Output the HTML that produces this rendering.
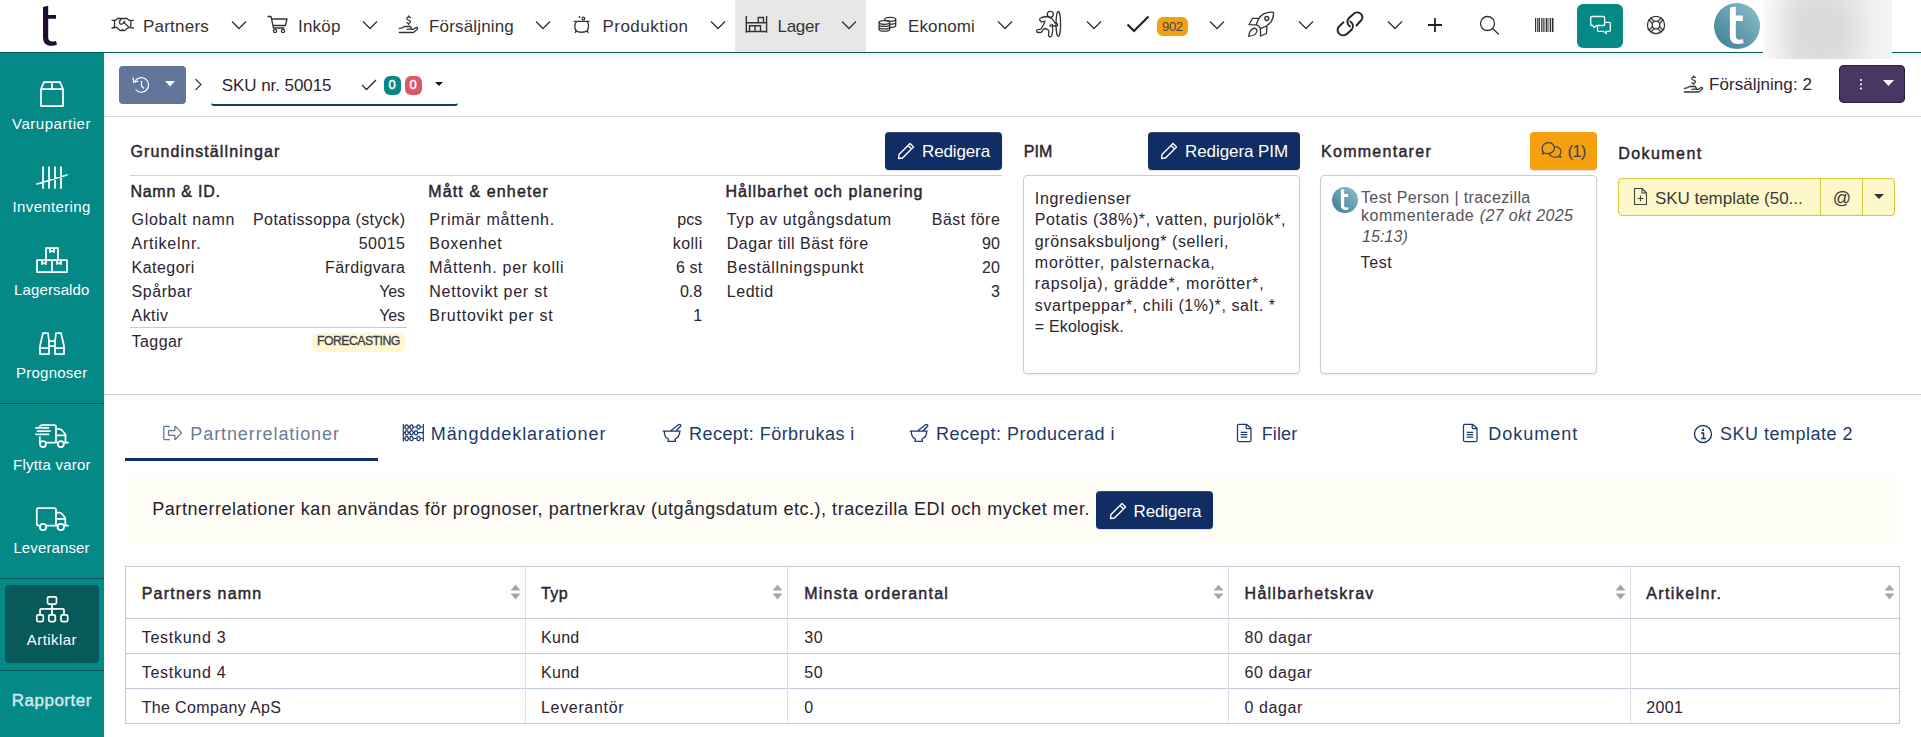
<!DOCTYPE html>
<html><head><meta charset="utf-8"><title>SKU nr. 50015</title>
<style>
html,body{margin:0;padding:0;}
body{width:1921px;height:737px;overflow:hidden;position:relative;background:#fff;font-family:"Liberation Sans",sans-serif;}
svg{overflow:visible}
</style></head><body>
<div style="position:absolute;left:0px;top:0px;width:1921px;height:52px;background:#ffffff;"></div>
<div style="position:absolute;left:735px;top:0px;width:131px;height:52px;background:#e7e7e7;"></div>
<div style="position:absolute;left:0px;top:52px;width:1921px;height:1px;background:#085b5a;"></div>
<div style="position:absolute;left:104px;top:53px;width:1817px;height:7px;background:linear-gradient(#efeff1,#ffffff)"></div>
<div style="position:absolute;left:104px;top:53px;width:5px;height:64px;background:linear-gradient(90deg,#f2f2f4,rgba(255,255,255,0))"></div>
<svg style="position:absolute;left:40px;top:3px;" width="20" height="46" viewBox="0 0 20 46"><path d="M3 4 L8.2 2.8 L8.2 12 L16 12 L16 15.8 L8.2 15.8 L8.2 34 C8.2 37.5 10 38.5 13 38.5 C14.5 38.5 15.5 38.2 16 38 L17 41.5 C15.5 42.5 13.5 42.8 11.5 42.8 C6 42.8 3 40 3 34 Z" fill="#1f0e30"/></svg>
<svg style="position:absolute;left:231px;top:20px;" width="16" height="10" viewBox="0 0 16 10"><path d="M1 1.5 L8 8.5 L15 1.5" fill="none" stroke="#333" stroke-width="1.3"/></svg>
<svg style="position:absolute;left:362px;top:20px;" width="16" height="10" viewBox="0 0 16 10"><path d="M1 1.5 L8 8.5 L15 1.5" fill="none" stroke="#333" stroke-width="1.3"/></svg>
<svg style="position:absolute;left:535px;top:20px;" width="16" height="10" viewBox="0 0 16 10"><path d="M1 1.5 L8 8.5 L15 1.5" fill="none" stroke="#333" stroke-width="1.3"/></svg>
<svg style="position:absolute;left:710px;top:20px;" width="16" height="10" viewBox="0 0 16 10"><path d="M1 1.5 L8 8.5 L15 1.5" fill="none" stroke="#333" stroke-width="1.3"/></svg>
<svg style="position:absolute;left:841px;top:20px;" width="16" height="10" viewBox="0 0 16 10"><path d="M1 1.5 L8 8.5 L15 1.5" fill="none" stroke="#333" stroke-width="1.3"/></svg>
<svg style="position:absolute;left:997px;top:20px;" width="16" height="10" viewBox="0 0 16 10"><path d="M1 1.5 L8 8.5 L15 1.5" fill="none" stroke="#333" stroke-width="1.3"/></svg>
<svg style="position:absolute;left:1086px;top:20px;" width="16" height="10" viewBox="0 0 16 10"><path d="M1 1.5 L8 8.5 L15 1.5" fill="none" stroke="#333" stroke-width="1.3"/></svg>
<svg style="position:absolute;left:1209px;top:20px;" width="16" height="10" viewBox="0 0 16 10"><path d="M1 1.5 L8 8.5 L15 1.5" fill="none" stroke="#333" stroke-width="1.3"/></svg>
<svg style="position:absolute;left:1298px;top:20px;" width="16" height="10" viewBox="0 0 16 10"><path d="M1 1.5 L8 8.5 L15 1.5" fill="none" stroke="#333" stroke-width="1.3"/></svg>
<svg style="position:absolute;left:1387px;top:20px;" width="16" height="10" viewBox="0 0 16 10"><path d="M1 1.5 L8 8.5 L15 1.5" fill="none" stroke="#333" stroke-width="1.3"/></svg>
<svg style="position:absolute;left:105px;top:10px;" width="36" height="30" viewBox="0 0 36 30"><path d="M7 10.3 L10.5 10.3 L12.5 8.5 L22 8.5 L24 10.3 L28.5 10.3 M9.5 10.3 L9.5 17.7 M7 18 L10.5 17.5 L12 17.5 L15 20.5 L17 20.5 L17.5 19.5 L18 20.5 L19.5 20.5 L24 17.3 L25.5 17.7 L28.5 18 M25.8 10.3 L25.8 17.7 M16.8 8.5 L14.6 11 C14.3 12.5 14.5 13.8 16 14.4 C17.5 14.5 18.5 13 19.5 11.3 L19.5 13 L24 17.3" fill="none" stroke="#333" stroke-width="1.3" stroke-linecap="round" stroke-linejoin="round" stroke-width="1.5"/></svg>
<svg style="position:absolute;left:267px;top:15px;" width="21" height="19" viewBox="0 0 21 19"><path d="M1 1.5 L4 1.5 L6.5 13 L17 13 M5 4 L20 4 L18.5 10.5 L6 10.5" fill="none" stroke="#333" stroke-width="1.3" stroke-linecap="round" stroke-linejoin="round"/><circle cx="8" cy="16" r="1.6" fill="none" stroke="#333" stroke-width="1.3" stroke-linecap="round" stroke-linejoin="round"/><circle cx="16" cy="16" r="1.6" fill="none" stroke="#333" stroke-width="1.3" stroke-linecap="round" stroke-linejoin="round"/></svg>
<svg style="position:absolute;left:394px;top:10px;" width="30" height="28" viewBox="0 0 30 28"><path d="M5.3 18.3 L8 17.8 L10.5 16.5 L16.5 16.5 L17.5 18.8 L13 19.3 M5.3 22.5 L19.5 22.5 L23 19.5 C24 18.5 23.5 17.3 22 17.5 L19.5 19.3 L17.3 19.3" fill="none" stroke="#333" stroke-width="1.3" stroke-linecap="round" stroke-linejoin="round"/><path d="M16.5 7.5 C15.5 6.8 14 6.8 13.2 7.6 C12.3 8.6 13 9.6 14.3 10 C15.8 10.5 16.8 11.2 16.2 12.5 C15.5 13.5 14 13.5 13 12.7 M14.6 5.8 L14.6 7 M14.6 13.3 L14.6 14.5" fill="none" stroke="#333" stroke-width="1.3" stroke-linecap="round" stroke-linejoin="round" stroke-width="1.4"/></svg>
<svg style="position:absolute;left:568px;top:10px;" width="28" height="28" viewBox="0 0 28 28"><path d="M6.3 11.4 L21 11.4 M8.3 11.8 C6.5 14 6.2 18 8 20.5 C10 22.8 17 22.8 19.3 20.5 C21 18 20.8 14 19.3 11.8 M8 21 L7.3 22.6 M19.3 21 L20 22.6" fill="none" stroke="#333" stroke-width="1.3" stroke-linecap="round" stroke-linejoin="round" stroke-width="1.4"/><circle cx="11.5" cy="7" r="0.9" fill="#333"/><circle cx="15.4" cy="8.5" r="1.3" fill="none" stroke="#333" stroke-width="1.3" stroke-linecap="round" stroke-linejoin="round" stroke-width="1.2"/></svg>
<svg style="position:absolute;left:740px;top:10px;" width="32" height="28" viewBox="0 0 32 28"><path d="M6.3 6 L6.3 22.8 M26.6 6 L26.6 22.8 M6.3 12.7 L26.6 12.7 M6.3 21.5 L26.6 21.5 M18.3 12.7 L18.3 7.5 L23.5 7.5 L23.5 12.7 M9.5 21.5 L9.5 15.8 L20.5 15.8 L20.5 21.5 M15 15.8 L15 21.5" fill="none" stroke="#333" stroke-width="1.4"/></svg>
<svg style="position:absolute;left:872px;top:10px;" width="30" height="28" viewBox="0 0 30 28"><ellipse cx="18.2" cy="9.3" rx="5.5" ry="1.9" fill="none" stroke="#333" stroke-width="1.3" stroke-linecap="round" stroke-linejoin="round"/><path d="M23.7 9.3 L23.7 15.5 C23.7 16.8 21 17.5 17.7 17.5 M17.7 14.3 C20 14.3 23.7 14 23.7 12.5" fill="none" stroke="#333" stroke-width="1.3" stroke-linecap="round" stroke-linejoin="round"/><ellipse cx="12.4" cy="12.5" rx="5.3" ry="1.8" fill="none" stroke="#333" stroke-width="1.3" stroke-linecap="round" stroke-linejoin="round" fill="#fff"/><path d="M7.1 12.5 L7.1 19.5 C7.1 21.8 17.7 21.8 17.7 19.5 L17.7 12.5 M7.1 14.8 C7.1 17 17.7 17 17.7 14.8 M7.1 17.3 C7.1 19.5 17.7 19.5 17.7 17.3" fill="none" stroke="#333" stroke-width="1.3" stroke-linecap="round" stroke-linejoin="round"/></svg>
<svg style="position:absolute;left:1030px;top:6px;" width="40" height="36" viewBox="0 0 40 36"><ellipse cx="28.3" cy="18" rx="2.3" ry="12.5" fill="none" stroke="#333" stroke-width="1.3" stroke-linecap="round" stroke-linejoin="round" stroke-width="1.7"/><circle cx="20.3" cy="8.3" r="3" fill="none" stroke="#333" stroke-width="1.3" stroke-linecap="round" stroke-linejoin="round" stroke-width="1.7"/><path d="M10 14.5 C9 13.5 10 12 11.5 11.5 L16 10.5 C19 10.5 21.5 11.5 23.5 14.5 L25 17 L27 17.5 C28 18 27.8 19.8 26.5 20 L23.5 20 L22 18.5 L22.8 24 L22 29 C21.8 31 19 31.5 18.5 29.5 L18.8 24.5 L16 22.5 L13.5 23 L11.3 26.3 L7.8 26.5 C6.3 26.3 6.3 24 7.8 23.7 L10.8 23.2 L13.5 19 L15 15 L11.5 16 Z" fill="none" stroke="#333" stroke-width="1.3" stroke-linecap="round" stroke-linejoin="round" stroke-width="1.7"/><path d="M20 17 L21.5 21 L19.5 20.5 Z" fill="#333"/></svg>
<svg style="position:absolute;left:1126px;top:15px;" width="25" height="19" viewBox="0 0 25 19"><path d="M1.5 9.5 L8 16 L22.5 1.5" fill="none" stroke="#222" stroke-width="2.2"/></svg>
<div style="position:absolute;left:1157px;top:17px;width:31px;height:19px;background:#f5a00e;border-radius:6px"></div>
<svg style="position:absolute;left:1240px;top:6px;" width="40" height="36" viewBox="0 0 40 36"><path d="M33.5 6.3 C26 5.5 21 9 18.5 13 L16.2 18.8 C18 19 19.5 20.3 20.5 22.7 L26.5 20 C31 17 34 12.5 33.5 6.3 Z M18.5 12.3 L12.5 12.3 L9 18.7 L16.2 18.8 M20.5 22.7 L20.5 30 L26.5 27.5 L27 20.5 M8.7 30.3 C9 27 10 24 13.5 22.3 C15.5 22 17 23 17 25 C16.5 28 13.5 29.7 8.7 30.3 Z" fill="none" stroke="#333" stroke-width="1.3" stroke-linecap="round" stroke-linejoin="round" stroke-width="1.8"/><circle cx="26.8" cy="12.5" r="2" fill="none" stroke="#333" stroke-width="1.3" stroke-linecap="round" stroke-linejoin="round" stroke-width="1.7"/></svg>
<svg style="position:absolute;left:1330px;top:6px;" width="40" height="36" viewBox="0 0 40 36"><path d="M20 20.5 C17 18.5 16.5 14.5 19 12 L23.5 8 C26 5.5 30 5.8 31.8 9 C32.8 11 32.3 13.5 30.5 15 L26.5 19.5 M20.3 15.5 C23 17 24 20.5 21.8 23.5 L17.5 27.5 C15 30 11 30 9 27.5 C7 25 7.3 22 9.5 20 L13.5 16.3" fill="none" stroke="#222" stroke-width="1.9" stroke-linecap="round"/></svg>
<svg style="position:absolute;left:1427px;top:17px;" width="16" height="16" viewBox="0 0 16 16"><path d="M8 1 L8 15 M1 8 L15 8" fill="none" stroke="#222" stroke-width="1.8"/></svg>
<svg style="position:absolute;left:1479px;top:15px;" width="21" height="20" viewBox="0 0 21 20"><circle cx="8.5" cy="8.5" r="7" fill="none" stroke="#333" stroke-width="1.3" stroke-linecap="round" stroke-linejoin="round"/><path d="M13.5 13.5 L19.5 19" fill="none" stroke="#333" stroke-width="1.3" stroke-linecap="round" stroke-linejoin="round"/></svg>
<svg style="position:absolute;left:1535px;top:18px;" width="19" height="14" viewBox="0 0 19 14"><rect x="0" y="0" width="1.2" height="14" fill="#333"/><rect x="2" y="0" width="0.8" height="14" fill="#333"/><rect x="3.5" y="0" width="1.5" height="14" fill="#333"/><rect x="6" y="0" width="0.8" height="14" fill="#333"/><rect x="7.5" y="0" width="1.2" height="14" fill="#333"/><rect x="9.5" y="0" width="0.8" height="14" fill="#333"/><rect x="11" y="0" width="1.5" height="14" fill="#333"/><rect x="13.5" y="0" width="0.8" height="14" fill="#333"/><rect x="15" y="0" width="1.2" height="14" fill="#333"/><rect x="17" y="0" width="1.5" height="14" fill="#333"/></svg>
<div style="position:absolute;left:1577px;top:4px;width:46px;height:44px;background:#048987;border-radius:6px"></div>
<svg style="position:absolute;left:1584px;top:10px;" width="32" height="30" viewBox="0 0 32 30"><path d="M20.6 12.3 L25.3 12.3 C25.9 12.3 26.3 12.7 26.3 13.3 L26.3 20.3 C26.3 20.9 25.9 21.3 25.3 21.3 L22 21.3 L22.5 23.5 L19 21.3 L14.5 21.3 C13.9 21.3 13.5 20.9 13.5 20.3 L13.5 15.5" fill="none" stroke="#f4ffff" stroke-width="1.3" stroke-linejoin="round"/><path d="M7.7 6.5 L19.6 6.5 C20.2 6.5 20.6 6.9 20.6 7.5 L20.6 14.5 C20.6 15.1 20.2 15.5 19.6 15.5 L12.5 15.5 L10 17.5 L9 15.5 L7.7 15.5 C7.1 15.5 6.7 15.1 6.7 14.5 L6.7 7.5 C6.7 6.9 7.1 6.5 7.7 6.5 Z" fill="#048987" stroke="#f4ffff" stroke-width="1.3" stroke-linejoin="round"/></svg>
<svg style="position:absolute;left:1646px;top:15px;" width="20" height="20" viewBox="0 0 20 20"><circle cx="10" cy="10" r="8.6" fill="none" stroke="#333" stroke-width="1.3" stroke-linecap="round" stroke-linejoin="round"/><circle cx="10" cy="10" r="3.8" fill="none" stroke="#333" stroke-width="1.3" stroke-linecap="round" stroke-linejoin="round"/><path d="M13.61 11.77 L17.00 15.16 M11.77 13.61 L15.16 17.00 M8.23 13.61 L4.84 17.00 M6.39 11.77 L3.00 15.16 M6.39 8.23 L3.00 4.84 M8.23 6.39 L4.84 3.00 M11.77 6.39 L15.16 3.00 M13.61 8.23 L17.00 4.84" fill="none" stroke="#333" stroke-width="1.3" stroke-linecap="round" stroke-linejoin="round" stroke-width="1.1"/></svg>
<div style="position:absolute;left:1714px;top:3px;width:46px;height:46px;border-radius:50%;background:linear-gradient(45deg,#3b7c91,#8fc0ce)"></div>
<svg style="position:absolute;left:1714px;top:3px;" width="46" height="46" viewBox="0 0 25.7 25.7"><path d="M8.9 2.5 L12.2 2 L12.2 7 L16.1 7 L16.1 10 L12.2 10 L12.2 18.5 C12.2 20 13.1 20.5 14.4 20.5 L16.2 20.3 L16.5 22.5 C15.4 22.8 14.4 22.9 13.4 22.9 C10.4 22.9 8.9 21.5 8.9 18.5 Z" fill="#fff"/></svg>
<div style="position:absolute;left:1763px;top:0px;width:129px;height:59px;background:linear-gradient(90deg,#fbfbfb 0%,#ececec 35%,#eeeeee 70%,#f3f4f4 100%);overflow:hidden"><div style="position:absolute;left:22px;top:-10px;width:70px;height:80px;background:#d9d9d9;filter:blur(13px);border-radius:20px"></div></div>
<div style="position:absolute;left:0px;top:53px;width:104px;height:684px;background:#048987;"></div>
<div style="position:absolute;left:0px;top:403px;width:104px;height:1px;background:#045857;"></div>
<div style="position:absolute;left:0px;top:578px;width:104px;height:1px;background:#045857;"></div>
<div style="position:absolute;left:0px;top:670px;width:104px;height:1px;background:#045857;"></div>
<div style="position:absolute;left:5px;top:585px;width:94px;height:78px;background:#07595a;border-radius:4px"></div>
<svg style="position:absolute;left:38px;top:80px;" width="28" height="28" viewBox="0 0 28 28"><path d="M3 9 L25 9 L25 26 L3 26 Z M3 9 L6 2 L22 2 L25 9 M14 2 L14 9" fill="none" stroke="#fff" stroke-width="1.75" stroke-linecap="round" stroke-linejoin="round"/></svg>
<svg style="position:absolute;left:35px;top:165px;" width="34" height="25" viewBox="0 0 34 25"><path d="M8 2 L8 23 M14 2 L14 23 M20 2 L20 23 M26 2 L26 23 M2 19 L32 10" fill="none" stroke="#fff" stroke-width="1.75" stroke-linecap="round" stroke-linejoin="round"/></svg>
<svg style="position:absolute;left:35px;top:246px;" width="34" height="28" viewBox="0 0 34 28"><path d="M11 2 L23 2 L23 14 L11 14 Z M2 14 L17 14 L17 26 L2 26 Z M17 14 L32 14 L32 26 L17 26 Z M15 2 L15 6 L17 5 L19 6 L19 2 M7 14 L7 18 L9 17 L11 18 L11 14 M22 14 L22 18 L24 17 L26 18 L26 14" fill="none" stroke="#fff" stroke-width="1.75" stroke-linecap="round" stroke-linejoin="round"/></svg>
<svg style="position:absolute;left:38px;top:331px;" width="28" height="25" viewBox="0 0 28 25"><path d="M5 2 L10 2 L11 10 L11 23 L2 23 L2 15 Z M18 2 L23 2 L26 15 L26 23 L17 23 L17 10 Z M11 10 L17 10 M11 15 L17 15 M2 17 L11 17 M17 17 L26 17" fill="none" stroke="#fff" stroke-width="1.75" stroke-linecap="round" stroke-linejoin="round"/></svg>
<svg style="position:absolute;left:30px;top:415px;" width="44" height="40" viewBox="0 0 44 40"><path d="M9.8 12.5 C9.8 11 10.5 10 12 10 L24.5 10 C25.5 10 26 10.5 26 11.5 L26 27.5 M9.8 22 L9.8 27.5 M16 27.5 L27.8 27.5 M26 14.2 L29.5 14.2 C30.5 14.2 31.5 14.7 32 15.3 L35.5 19.5 L35.5 27.5 L33.8 27.5 M26 20.3 L35.5 20.3 M35.5 27.5 L38 27.5 M6 12.8 L18.5 12.8 M7.5 16.2 L20 16.2 M6 19.3 L18.5 19.3" fill="none" stroke="#fff" stroke-width="1.75" stroke-linecap="round" stroke-linejoin="round"/><circle cx="13" cy="29" r="3" fill="none" stroke="#fff" stroke-width="1.75" stroke-linecap="round" stroke-linejoin="round"/><circle cx="30.8" cy="29" r="3" fill="none" stroke="#fff" stroke-width="1.75" stroke-linecap="round" stroke-linejoin="round"/></svg>
<svg style="position:absolute;left:30px;top:500px;" width="44" height="40" viewBox="0 0 44 40"><path d="M9.5 25.5 L8.3 25.5 C7.5 25.5 6.8 24.8 6.8 24 L6.8 9.5 C6.8 8.7 7.5 8 8.3 8 L24.5 8 C25.3 8 26 8.7 26 9.5 L26 25.5 M16.2 25.5 L27.6 25.5 M26 12.5 L29.5 12.5 C30.3 12.5 31 12.8 31.5 13.3 L35.3 18 L35.3 25.5 L34 25.5 M26 18.8 L35.3 18.8 M35.3 25.5 L38 25.5" fill="none" stroke="#fff" stroke-width="1.75" stroke-linecap="round" stroke-linejoin="round"/><circle cx="13" cy="27" r="3.2" fill="none" stroke="#fff" stroke-width="1.75" stroke-linecap="round" stroke-linejoin="round"/><circle cx="30.8" cy="27" r="3.2" fill="none" stroke="#fff" stroke-width="1.75" stroke-linecap="round" stroke-linejoin="round"/></svg>
<svg style="position:absolute;left:30px;top:590px;" width="44" height="40" viewBox="0 0 44 40"><rect x="17.5" y="6.8" width="9" height="7.2" rx="1.5" fill="none" stroke="#fff" stroke-width="1.75" stroke-linecap="round" stroke-linejoin="round"/><path d="M22 14 L22 24.8 M10 24.8 L10 20.3 C10 19.5 10.5 18.8 11.3 18.8 L32.7 18.8 C33.5 18.8 34 19.5 34 20.3 L34 24.8" fill="none" stroke="#fff" stroke-width="1.75" stroke-linecap="round" stroke-linejoin="round"/><rect x="6.8" y="24.8" width="6.5" height="6.7" rx="1.5" fill="none" stroke="#fff" stroke-width="1.75" stroke-linecap="round" stroke-linejoin="round"/><rect x="18.8" y="24.8" width="6.5" height="6.7" rx="1.5" fill="none" stroke="#fff" stroke-width="1.75" stroke-linecap="round" stroke-linejoin="round"/><rect x="31" y="24.8" width="6.7" height="6.7" rx="1.5" fill="none" stroke="#fff" stroke-width="1.75" stroke-linecap="round" stroke-linejoin="round"/></svg>
<div style="position:absolute;left:104px;top:116px;width:1817px;height:1px;background:#d9dbe3;"></div>
<div style="position:absolute;left:119px;top:66px;width:67px;height:38px;background:#61769a;border-radius:4px"></div>
<svg style="position:absolute;left:131px;top:75px;" width="20" height="20" viewBox="0 0 20 20"><path d="M3.8 6.5 A7.3 7.3 0 1 1 4.5 14.5" fill="none" stroke="#fff" stroke-width="1.2"/><path d="M2 2.5 L2.8 7.3 L7.3 6" fill="none" stroke="#fff" stroke-width="1.3"/><path d="M10.5 6 L10.5 11 L13 13.5" fill="none" stroke="#fff" stroke-width="1.2"/></svg>
<svg style="position:absolute;left:165px;top:81px;" width="10" height="6" viewBox="0 0 10 6"><path d="M0 0 L10 0 L5 5.5 Z" fill="#fff"/></svg>
<svg style="position:absolute;left:194px;top:78px;" width="8" height="13" viewBox="0 0 8 13"><path d="M1.5 1 L7 6.5 L1.5 12" fill="none" stroke="#3a3040" stroke-width="1.1"/></svg>
<div style="position:absolute;left:211px;top:101px;width:247px;height:3px;border-bottom:2px solid #1c3a72;border-radius:0 0 3px 3px"></div>
<svg style="position:absolute;left:361px;top:79px;" width="16" height="12" viewBox="0 0 16 12"><path d="M1 6 L5.5 10.5 L15 1" fill="none" stroke="#2a2030" stroke-width="1.3"/></svg>
<div style="position:absolute;left:384px;top:76px;width:17px;height:19px;background:#048987;border-radius:6px"></div>
<div style="position:absolute;left:405px;top:76px;width:17px;height:19px;background:#d95a66;border-radius:6px"></div>
<svg style="position:absolute;left:435px;top:82px;" width="8" height="4" viewBox="0 0 8 4"><path d="M0 0 L8 0 L4 4 Z" fill="#1a1020"/></svg>
<svg style="position:absolute;left:1678.5px;top:70px;" width="30" height="28" viewBox="0 0 30 28"><path d="M5.3 18.3 L8 17.8 L10.5 16.5 L16.5 16.5 L17.5 18.8 L13 19.3 M5.3 22 L19.5 22 L23 19.5 C24 18.5 23.5 17.3 22 17.5 L19.5 19.3 L17.3 19.3" fill="none" stroke="#333" stroke-width="1.3" stroke-linecap="round" stroke-linejoin="round" stroke-width="1.2"/><path d="M16.5 7.5 C15.5 6.8 14 6.8 13.2 7.6 C12.3 8.6 13 9.6 14.3 10 C15.8 10.5 16.8 11.2 16.2 12.5 C15.5 13.5 14 13.5 13 12.7 M14.6 5.8 L14.6 7 M14.6 13.3 L14.6 14.5" fill="none" stroke="#333" stroke-width="1.3" stroke-linecap="round" stroke-linejoin="round" stroke-width="1.2"/></svg>
<div style="position:absolute;left:1839px;top:65px;width:66px;height:38px;background:#4a3663;border-radius:5px;box-shadow:inset 0 0 0 1px #2f2040"></div>
<div style="position:absolute;left:1859.5px;top:78.5px;width:2.5px;height:2.5px;border-radius:50%;background:#fff;box-shadow:0 4.3px 0 #fff,0 8.6px 0 #fff"></div>
<svg style="position:absolute;left:1883px;top:80px;" width="11" height="7" viewBox="0 0 11 7"><path d="M0 0 L11 0 L5.5 6 Z" fill="#fff"/></svg>
<div style="position:absolute;left:885px;top:132px;width:117px;height:38px;background:#112e64;border-radius:4px;box-shadow:0 1px 1px rgba(0,0,0,0.15), inset 0 1px 0 rgba(255,255,255,0.15)"></div>
<svg style="position:absolute;left:897px;top:141.5px;" width="18" height="18" viewBox="0 0 18 18"><path d="M13 1.5 L16.5 5 L5.5 16 L1.5 16.5 L2 12.5 Z M11 3.5 L14.5 7" fill="none" stroke="#fff" stroke-width="1.4" stroke-linejoin="round"/></svg>
<div style="position:absolute;left:130px;top:175px;width:872px;height:1px;background:#cfd1da;"></div>
<div style="position:absolute;left:130px;top:327px;width:277px;height:1px;background:#c7cad3;"></div>
<div style="position:absolute;left:312px;top:333px;width:93px;height:19px;background:#fdf8d0;border-radius:6px"></div>
<div style="position:absolute;left:1148px;top:132px;width:152px;height:38px;background:#112e64;border-radius:4px;box-shadow:0 1px 1px rgba(0,0,0,0.15), inset 0 1px 0 rgba(255,255,255,0.15)"></div>
<svg style="position:absolute;left:1160px;top:141.5px;" width="18" height="18" viewBox="0 0 18 18"><path d="M13 1.5 L16.5 5 L5.5 16 L1.5 16.5 L2 12.5 Z M11 3.5 L14.5 7" fill="none" stroke="#fff" stroke-width="1.4" stroke-linejoin="round"/></svg>
<div style="position:absolute;left:1023px;top:175px;width:275px;height:197px;border:1px solid #cbccd6;border-radius:4px;box-shadow:0 1px 2px rgba(0,0,0,0.08);background:#fff"></div>
<div style="position:absolute;left:1530px;top:132px;width:67px;height:38px;background:#f5a00e;border-radius:4px;box-shadow:0 1px 1px rgba(0,0,0,0.12)"></div>
<svg style="position:absolute;left:1540px;top:141px;" width="24" height="19" viewBox="0 0 24 19"><path d="M3.5 11.5 C1.5 9.5 1.8 5 4.5 3 C7 1.5 10.5 1.5 12.5 3 C15 5 15 9 12.5 11 C10.5 12.5 7 12.8 4.5 12 L2.5 13 Z M14.5 5.8 C18 5.5 21 7.5 21 10.5 C21 12.5 20 13.5 19.5 14 L21 16.5 L18 15.5 C15.5 16.7 11.5 16.5 9 12.8" fill="none" stroke="#3a4454" stroke-width="1.2" stroke-linejoin="round"/></svg>
<div style="position:absolute;left:1320px;top:175px;width:275px;height:197px;border:1px solid #cbccd6;border-radius:4px;box-shadow:0 1px 2px rgba(0,0,0,0.08);background:#fff"></div>
<div style="position:absolute;left:1332px;top:187px;width:26px;height:26px;border-radius:50%;background:linear-gradient(45deg,#3b7c91,#8fc0ce)"></div>
<svg style="position:absolute;left:1332px;top:187px;" width="26" height="26" viewBox="0 0 26 26"><path d="M8.9 2.5 L12.2 2 L12.2 7 L16.1 7 L16.1 10 L12.2 10 L12.2 18.5 C12.2 20 13.1 20.5 14.4 20.5 L16.2 20.3 L16.5 22.5 C15.4 22.8 14.4 22.9 13.4 22.9 C10.4 22.9 8.9 21.5 8.9 18.5 Z" fill="#fff"/></svg>
<div style="position:absolute;left:1618px;top:178px;width:275px;height:36px;border:1px solid #d7c73e;border-radius:4px;background:#fdf8c9"></div>
<div style="position:absolute;left:1820px;top:179px;width:1px;height:36px;background:#d7c73e;"></div>
<div style="position:absolute;left:1862px;top:179px;width:1px;height:36px;background:#d7c73e;"></div>
<svg style="position:absolute;left:1633px;top:187px;" width="15" height="19" viewBox="0 0 15 19"><path d="M1.5 1.5 L9 1.5 L13.5 6 L13.5 17.5 L1.5 17.5 Z M9 1.5 L9 6 L13.5 6 M7.5 8.5 L7.5 14.5 M4.5 11.5 L10.5 11.5" fill="none" stroke="#444" stroke-width="1.1" stroke-linejoin="round"/></svg>
<svg style="position:absolute;left:1874px;top:194px;" width="10" height="6" viewBox="0 0 10 6"><path d="M0 0 L10 0 L5 5 Z" fill="#333"/></svg>
<div style="position:absolute;left:104px;top:394px;width:1817px;height:1px;background:#cdd0d8;"></div>
<svg style="position:absolute;left:156px;top:420px;" width="34" height="26" viewBox="0 0 34 26"><path d="M13.8 6.3 L8.5 6.3 C8 6.3 7.8 6.6 7.8 7 L7.8 18.8 C7.8 19.2 8 19.5 8.5 19.5 L13.8 19.5 M12.5 11.2 C12.5 10.8 12.8 10.5 13.2 10.5 L18.8 10.5 L18.8 7 C18.8 6.4 19.3 6.2 19.7 6.6 L25.5 12.9 L19.7 19.2 C19.3 19.6 18.8 19.4 18.8 18.8 L18.8 15.3 L13.2 15.3 C12.8 15.3 12.5 15 12.5 14.6 Z" fill="none" stroke="#5f7290" stroke-width="1.25" stroke-linejoin="round"/></svg>
<div style="position:absolute;left:125px;top:458px;width:253px;height:3px;background:#112e64;"></div>
<svg style="position:absolute;left:398px;top:418px;" width="30" height="30" viewBox="0 0 30 30"><path d="M5.3 6 L5.3 23.5 M25.3 6 L25.3 23.5 M5.3 9 L25.3 9 M5.3 14.7 L25.3 14.7 M5.3 20.5 L25.3 20.5" fill="none" stroke="#1c3a6c" stroke-width="1.2"/><ellipse cx="8.7" cy="9" rx="1.6" ry="2.1" fill="#fff" stroke="#1c3a6c" stroke-width="1.2"/><ellipse cx="13.5" cy="9" rx="1.6" ry="2.1" fill="#fff" stroke="#1c3a6c" stroke-width="1.2"/><ellipse cx="20.5" cy="9" rx="1.6" ry="2.1" fill="#fff" stroke="#1c3a6c" stroke-width="1.2"/><ellipse cx="8.7" cy="14.7" rx="1.6" ry="2.1" fill="#fff" stroke="#1c3a6c" stroke-width="1.2"/><ellipse cx="13.5" cy="14.7" rx="1.6" ry="2.1" fill="#fff" stroke="#1c3a6c" stroke-width="1.2"/><ellipse cx="18" cy="14.7" rx="1.6" ry="2.1" fill="#fff" stroke="#1c3a6c" stroke-width="1.2"/><ellipse cx="8.7" cy="20.5" rx="1.6" ry="2.1" fill="#fff" stroke="#1c3a6c" stroke-width="1.2"/><ellipse cx="13.5" cy="20.5" rx="1.6" ry="2.1" fill="#fff" stroke="#1c3a6c" stroke-width="1.2"/><ellipse cx="20.5" cy="20.5" rx="1.6" ry="2.1" fill="#fff" stroke="#1c3a6c" stroke-width="1.2"/></svg>
<svg style="position:absolute;left:656px;top:418px;" width="30" height="30" viewBox="0 0 30 30"><path d="M6.7 13.2 L24.6 13.2 M8.3 13.5 C8.3 17.5 10 20 12.5 21 L12 23.3 L19.5 23.3 L19 21 C21.5 20 23.7 17.5 23.7 13.5 M14.5 13 L22.5 6.8 C23.5 6 25 6.5 24.8 8 L20 13" fill="none" stroke="#1c3a6c" stroke-width="1.3" stroke-linejoin="round"/></svg>
<svg style="position:absolute;left:903px;top:418px;" width="30" height="30" viewBox="0 0 30 30"><path d="M6.7 13.2 L24.6 13.2 M8.3 13.5 C8.3 17.5 10 20 12.5 21 L12 23.3 L19.5 23.3 L19 21 C21.5 20 23.7 17.5 23.7 13.5 M14.5 13 L22.5 6.8 C23.5 6 25 6.5 24.8 8 L20 13" fill="none" stroke="#1c3a6c" stroke-width="1.3" stroke-linejoin="round"/></svg>
<svg style="position:absolute;left:1230px;top:418px;" width="28" height="30" viewBox="0 0 28 30"><path d="M8.8 6.3 L16.5 6.3 L21 10.3 L21 22.3 C21 23 20.5 23.5 19.8 23.5 L8.8 23.5 C8 23.5 7.5 23 7.5 22.3 L7.5 7.5 C7.5 6.8 8 6.3 8.8 6.3 Z M16.2 6.5 L16.2 9.8 C16.2 10.3 16.5 10.6 17 10.6 L20.8 10.6 M10.7 14.3 L17.3 14.3 M10.7 16.7 L17.3 16.7 M10.7 19.2 L17.3 19.2" fill="none" stroke="#1c3a6c" stroke-width="1.25" stroke-linejoin="round"/></svg>
<svg style="position:absolute;left:1456px;top:418px;" width="28" height="30" viewBox="0 0 28 30"><path d="M8.8 6.3 L16.5 6.3 L21 10.3 L21 22.3 C21 23 20.5 23.5 19.8 23.5 L8.8 23.5 C8 23.5 7.5 23 7.5 22.3 L7.5 7.5 C7.5 6.8 8 6.3 8.8 6.3 Z M16.2 6.5 L16.2 9.8 C16.2 10.3 16.5 10.6 17 10.6 L20.8 10.6 M10.7 14.3 L17.3 14.3 M10.7 16.7 L17.3 16.7 M10.7 19.2 L17.3 19.2" fill="none" stroke="#1c3a6c" stroke-width="1.25" stroke-linejoin="round"/></svg>
<svg style="position:absolute;left:1693px;top:424px;" width="20" height="20" viewBox="0 0 20 20"><circle cx="10" cy="10" r="8.5" fill="none" stroke="#1c3a6c" stroke-width="1.4"/><circle cx="10" cy="6" r="1.2" fill="#1c3a6c"/><path d="M8 9 L10.5 9 L10.5 14.5 M8 14.5 L13 14.5" fill="none" stroke="#1c3a6c" stroke-width="1.5"/></svg>
<div style="position:absolute;left:125px;top:475px;width:1774px;height:71px;background:#fefdf6;"></div>
<div style="position:absolute;left:1096px;top:491px;width:117px;height:38px;background:#112e64;border-radius:4px;box-shadow:0 1px 1px rgba(0,0,0,0.15), inset 0 1px 0 rgba(255,255,255,0.15)"></div>
<svg style="position:absolute;left:1108.5px;top:501.5px;" width="18" height="18" viewBox="0 0 18 18"><path d="M13 1.5 L16.5 5 L5.5 16 L1.5 16.5 L2 12.5 Z M11 3.5 L14.5 7" fill="none" stroke="#fff" stroke-width="1.4" stroke-linejoin="round"/></svg>
<div style="position:absolute;left:125px;top:566px;width:1775px;height:1px;background:#c3c8da;"></div>
<div style="position:absolute;left:125px;top:618px;width:1775px;height:1px;background:#c3c8da;"></div>
<div style="position:absolute;left:125px;top:653px;width:1775px;height:1px;background:#c3c8da;"></div>
<div style="position:absolute;left:125px;top:688px;width:1775px;height:1px;background:#c3c8da;"></div>
<div style="position:absolute;left:125px;top:723px;width:1775px;height:1px;background:#c3c8da;"></div>
<div style="position:absolute;left:125px;top:566px;width:1px;height:158px;background:#c3c8da;"></div>
<div style="position:absolute;left:1899px;top:566px;width:1px;height:158px;background:#c3c8da;"></div>
<div style="position:absolute;left:525px;top:567px;width:1px;height:156px;background:#dcdfe8;"></div>
<div style="position:absolute;left:787px;top:567px;width:1px;height:156px;background:#dcdfe8;"></div>
<div style="position:absolute;left:1228px;top:567px;width:1px;height:156px;background:#dcdfe8;"></div>
<div style="position:absolute;left:1630px;top:567px;width:1px;height:156px;background:#dcdfe8;"></div>
<svg style="position:absolute;left:510px;top:584px;" width="11" height="17" viewBox="0 0 11 17"><path d="M5.5 0.5 L10.5 6.5 L0.5 6.5 Z M0.5 9.5 L10.5 9.5 L5.5 15.5 Z" fill="#a8a8a8"/></svg>
<svg style="position:absolute;left:772px;top:584px;" width="11" height="17" viewBox="0 0 11 17"><path d="M5.5 0.5 L10.5 6.5 L0.5 6.5 Z M0.5 9.5 L10.5 9.5 L5.5 15.5 Z" fill="#a8a8a8"/></svg>
<svg style="position:absolute;left:1213px;top:584px;" width="11" height="17" viewBox="0 0 11 17"><path d="M5.5 0.5 L10.5 6.5 L0.5 6.5 Z M0.5 9.5 L10.5 9.5 L5.5 15.5 Z" fill="#a8a8a8"/></svg>
<svg style="position:absolute;left:1615px;top:584px;" width="11" height="17" viewBox="0 0 11 17"><path d="M5.5 0.5 L10.5 6.5 L0.5 6.5 Z M0.5 9.5 L10.5 9.5 L5.5 15.5 Z" fill="#a8a8a8"/></svg>
<svg style="position:absolute;left:1884px;top:584px;" width="11" height="17" viewBox="0 0 11 17"><path d="M5.5 0.5 L10.5 6.5 L0.5 6.5 Z M0.5 9.5 L10.5 9.5 L5.5 15.5 Z" fill="#a8a8a8"/></svg>
<div style="position:absolute;top:14.00px;font-size:17px;line-height:25.5px;font-weight:400;font-style:normal;color:#333333;letter-spacing:0.219px;white-space:pre;left:143.00px;">Partners</div>
<div style="position:absolute;top:14.00px;font-size:17px;line-height:25.5px;font-weight:400;font-style:normal;color:#333333;letter-spacing:0.201px;white-space:pre;left:298.00px;">Inköp</div>
<div style="position:absolute;top:14.00px;font-size:17px;line-height:25.5px;font-weight:400;font-style:normal;color:#333333;letter-spacing:0.168px;white-space:pre;left:429.00px;">Försäljning</div>
<div style="position:absolute;top:14.00px;font-size:17px;line-height:25.5px;font-weight:400;font-style:normal;color:#333333;letter-spacing:0.472px;white-space:pre;left:602.50px;">Produktion</div>
<div style="position:absolute;top:14.00px;font-size:17px;line-height:25.5px;font-weight:400;font-style:normal;color:#333333;letter-spacing:-0.297px;white-space:pre;left:777.50px;">Lager</div>
<div style="position:absolute;top:14.00px;font-size:17px;line-height:25.5px;font-weight:400;font-style:normal;color:#333333;letter-spacing:0.123px;white-space:pre;left:908.00px;">Ekonomi</div>
<div style="position:absolute;top:17.00px;font-size:13px;line-height:19.5px;font-weight:400;font-style:normal;color:#3a4760;letter-spacing:-0.334px;white-space:pre;left:1162.00px;">902</div>
<div style="position:absolute;top:113.00px;font-size:15px;line-height:22.5px;font-weight:400;font-style:normal;color:#ffffff;letter-spacing:0.537px;white-space:pre;left:12.00px;">Varupartier</div>
<div style="position:absolute;top:196.00px;font-size:15px;line-height:22.5px;font-weight:400;font-style:normal;color:#ffffff;letter-spacing:0.344px;white-space:pre;left:12.60px;">Inventering</div>
<div style="position:absolute;top:279.00px;font-size:15px;line-height:22.5px;font-weight:400;font-style:normal;color:#ffffff;letter-spacing:0.127px;white-space:pre;left:14.00px;">Lagersaldo</div>
<div style="position:absolute;top:362.00px;font-size:15px;line-height:22.5px;font-weight:400;font-style:normal;color:#ffffff;letter-spacing:0.242px;white-space:pre;left:16.00px;">Prognoser</div>
<div style="position:absolute;top:454.00px;font-size:15px;line-height:22.5px;font-weight:400;font-style:normal;color:#ffffff;letter-spacing:0.224px;white-space:pre;left:13.00px;">Flytta varor</div>
<div style="position:absolute;top:537.00px;font-size:15px;line-height:22.5px;font-weight:400;font-style:normal;color:#ffffff;letter-spacing:0.125px;white-space:pre;left:13.40px;">Leveranser</div>
<div style="position:absolute;top:629.00px;font-size:15px;line-height:22.5px;font-weight:400;font-style:normal;color:#ffffff;letter-spacing:0.441px;white-space:pre;left:26.80px;">Artiklar</div>
<div style="position:absolute;top:688.00px;font-size:17px;line-height:25.5px;font-weight:400;font-style:normal;color:#d5e7e6;letter-spacing:0.488px;white-space:pre;left:11.80px;-webkit-text-stroke:0.45px #d5e7e6;">Rapporter</div>
<div style="position:absolute;top:73.00px;font-size:17px;line-height:25.5px;font-weight:400;font-style:normal;color:#2c2431;letter-spacing:-0.068px;white-space:pre;left:221.80px;">SKU nr. 50015</div>
<div style="position:absolute;top:75.00px;font-size:13px;line-height:19.5px;font-weight:400;font-style:normal;color:#ffffff;letter-spacing:0.000px;white-space:pre;left:388.50px;-webkit-text-stroke:0.2px #fff;-webkit-text-stroke:0.45px #ffffff;">0</div>
<div style="position:absolute;top:75.00px;font-size:13px;line-height:19.5px;font-weight:400;font-style:normal;color:#ffffff;letter-spacing:0.000px;white-space:pre;left:409.50px;-webkit-text-stroke:0.2px #fff;-webkit-text-stroke:0.45px #ffffff;">0</div>
<div style="position:absolute;top:72.00px;font-size:17px;line-height:25.5px;font-weight:400;font-style:normal;color:#2c2431;letter-spacing:0.067px;white-space:pre;left:1709.00px;">Försäljning: 2</div>
<div style="position:absolute;top:140.00px;font-size:16px;line-height:24.0px;font-weight:400;font-style:normal;color:#2c2431;letter-spacing:1.119px;white-space:pre;left:130.40px;-webkit-text-stroke:0.45px #2c2431;">Grundinställningar</div>
<div style="position:absolute;top:139.00px;font-size:17px;line-height:25.5px;font-weight:400;font-style:normal;color:#fff;letter-spacing:-0.125px;white-space:pre;left:922.00px;">Redigera</div>
<div style="position:absolute;top:180.00px;font-size:16px;line-height:24.0px;font-weight:400;font-style:normal;color:#2c2431;letter-spacing:0.761px;white-space:pre;left:130.40px;-webkit-text-stroke:0.45px #2c2431;">Namn &amp; ID.</div>
<div style="position:absolute;top:180.00px;font-size:16px;line-height:24.0px;font-weight:400;font-style:normal;color:#2c2431;letter-spacing:1.132px;white-space:pre;left:428.20px;-webkit-text-stroke:0.45px #2c2431;">Mått &amp; enheter</div>
<div style="position:absolute;top:180.00px;font-size:16px;line-height:24.0px;font-weight:400;font-style:normal;color:#2c2431;letter-spacing:1.023px;white-space:pre;left:725.50px;-webkit-text-stroke:0.45px #2c2431;">Hållbarhet och planering</div>
<div style="position:absolute;top:208.00px;font-size:16px;line-height:24.0px;font-weight:400;font-style:normal;color:#2c2431;letter-spacing:0.686px;white-space:pre;left:131.60px;">Globalt namn</div>
<div style="position:absolute;top:208.00px;font-size:16px;line-height:24.0px;font-weight:400;font-style:normal;color:#2c2431;letter-spacing:0.417px;white-space:pre;right:1515.58px;">Potatissoppa (styck)</div>
<div style="position:absolute;top:232.00px;font-size:16px;line-height:24.0px;font-weight:400;font-style:normal;color:#2c2431;letter-spacing:0.755px;white-space:pre;left:131.60px;">Artikelnr.</div>
<div style="position:absolute;top:232.00px;font-size:16px;line-height:24.0px;font-weight:400;font-style:normal;color:#2c2431;letter-spacing:0.440px;white-space:pre;right:1515.56px;">50015</div>
<div style="position:absolute;top:256.00px;font-size:16px;line-height:24.0px;font-weight:400;font-style:normal;color:#2c2431;letter-spacing:0.463px;white-space:pre;left:131.60px;">Kategori</div>
<div style="position:absolute;top:256.00px;font-size:16px;line-height:24.0px;font-weight:400;font-style:normal;color:#2c2431;letter-spacing:0.382px;white-space:pre;right:1515.62px;">Färdigvara</div>
<div style="position:absolute;top:280.00px;font-size:16px;line-height:24.0px;font-weight:400;font-style:normal;color:#2c2431;letter-spacing:0.540px;white-space:pre;left:131.60px;">Spårbar</div>
<div style="position:absolute;top:280.00px;font-size:16px;line-height:24.0px;font-weight:400;font-style:normal;color:#2c2431;letter-spacing:-0.236px;white-space:pre;right:1516.24px;">Yes</div>
<div style="position:absolute;top:304.00px;font-size:16px;line-height:24.0px;font-weight:400;font-style:normal;color:#2c2431;letter-spacing:0.426px;white-space:pre;left:131.60px;">Aktiv</div>
<div style="position:absolute;top:304.00px;font-size:16px;line-height:24.0px;font-weight:400;font-style:normal;color:#2c2431;letter-spacing:-0.236px;white-space:pre;right:1516.24px;">Yes</div>
<div style="position:absolute;top:330.00px;font-size:16px;line-height:24.0px;font-weight:400;font-style:normal;color:#2c2431;letter-spacing:0.430px;white-space:pre;left:131.60px;">Taggar</div>
<div style="position:absolute;top:332.00px;font-size:12.3px;line-height:18.450000000000003px;font-weight:400;font-style:normal;color:#3b3a48;letter-spacing:-0.548px;white-space:pre;left:317.00px;-webkit-text-stroke:0.3px #3b3a48;">FORECASTING</div>
<div style="position:absolute;top:208.00px;font-size:16px;line-height:24.0px;font-weight:400;font-style:normal;color:#2c2431;letter-spacing:0.793px;white-space:pre;left:429.30px;">Primär måttenh.</div>
<div style="position:absolute;top:208.00px;font-size:16px;line-height:24.0px;font-weight:400;font-style:normal;color:#2c2431;letter-spacing:0.031px;white-space:pre;right:1218.77px;">pcs</div>
<div style="position:absolute;top:232.00px;font-size:16px;line-height:24.0px;font-weight:400;font-style:normal;color:#2c2431;letter-spacing:0.699px;white-space:pre;left:429.30px;">Boxenhet</div>
<div style="position:absolute;top:232.00px;font-size:16px;line-height:24.0px;font-weight:400;font-style:normal;color:#2c2431;letter-spacing:0.487px;white-space:pre;right:1218.31px;">kolli</div>
<div style="position:absolute;top:256.00px;font-size:16px;line-height:24.0px;font-weight:400;font-style:normal;color:#2c2431;letter-spacing:0.731px;white-space:pre;left:429.30px;">Måttenh. per kolli</div>
<div style="position:absolute;top:256.00px;font-size:16px;line-height:24.0px;font-weight:400;font-style:normal;color:#2c2431;letter-spacing:0.176px;white-space:pre;right:1218.62px;">6 st</div>
<div style="position:absolute;top:280.00px;font-size:16px;line-height:24.0px;font-weight:400;font-style:normal;color:#2c2431;letter-spacing:0.756px;white-space:pre;left:429.30px;">Nettovikt per st</div>
<div style="position:absolute;top:280.00px;font-size:16px;line-height:24.0px;font-weight:400;font-style:normal;color:#2c2431;letter-spacing:-0.017px;white-space:pre;right:1218.82px;">0.8</div>
<div style="position:absolute;top:304.00px;font-size:16px;line-height:24.0px;font-weight:400;font-style:normal;color:#2c2431;letter-spacing:0.767px;white-space:pre;left:429.30px;">Bruttovikt per st</div>
<div style="position:absolute;top:304.00px;font-size:16px;line-height:24.0px;font-weight:400;font-style:normal;color:#2c2431;letter-spacing:0.623px;white-space:pre;right:1218.18px;">1</div>
<div style="position:absolute;top:208.00px;font-size:16px;line-height:24.0px;font-weight:400;font-style:normal;color:#2c2431;letter-spacing:0.632px;white-space:pre;left:726.80px;">Typ av utgångsdatum</div>
<div style="position:absolute;top:208.00px;font-size:16px;line-height:24.0px;font-weight:400;font-style:normal;color:#2c2431;letter-spacing:0.497px;white-space:pre;right:920.70px;">Bäst före</div>
<div style="position:absolute;top:232.00px;font-size:16px;line-height:24.0px;font-weight:400;font-style:normal;color:#2c2431;letter-spacing:0.510px;white-space:pre;left:726.80px;">Dagar till Bäst före</div>
<div style="position:absolute;top:232.00px;font-size:16px;line-height:24.0px;font-weight:400;font-style:normal;color:#2c2431;letter-spacing:0.052px;white-space:pre;right:921.15px;">90</div>
<div style="position:absolute;top:256.00px;font-size:16px;line-height:24.0px;font-weight:400;font-style:normal;color:#2c2431;letter-spacing:0.705px;white-space:pre;left:726.80px;">Beställningspunkt</div>
<div style="position:absolute;top:256.00px;font-size:16px;line-height:24.0px;font-weight:400;font-style:normal;color:#2c2431;letter-spacing:0.052px;white-space:pre;right:921.15px;">20</div>
<div style="position:absolute;top:280.00px;font-size:16px;line-height:24.0px;font-weight:400;font-style:normal;color:#2c2431;letter-spacing:0.534px;white-space:pre;left:726.80px;">Ledtid</div>
<div style="position:absolute;top:280.00px;font-size:16px;line-height:24.0px;font-weight:400;font-style:normal;color:#2c2431;letter-spacing:0.623px;white-space:pre;right:920.58px;">3</div>
<div style="position:absolute;top:140.00px;font-size:16px;line-height:24.0px;font-weight:400;font-style:normal;color:#2c2431;letter-spacing:0.016px;white-space:pre;left:1023.80px;-webkit-text-stroke:0.45px #2c2431;">PIM</div>
<div style="position:absolute;top:139.00px;font-size:17px;line-height:25.5px;font-weight:400;font-style:normal;color:#fff;letter-spacing:-0.078px;white-space:pre;left:1185.00px;">Redigera PIM</div>
<div style="position:absolute;top:187.00px;font-size:16px;line-height:24.0px;font-weight:400;font-style:normal;color:#2c2431;letter-spacing:0.637px;white-space:pre;left:1034.80px;">Ingredienser</div>
<div style="position:absolute;top:208.00px;font-size:16px;line-height:24.0px;font-weight:400;font-style:normal;color:#2c2431;letter-spacing:0.616px;white-space:pre;left:1034.80px;">Potatis (38%)*, vatten, purjolök*,</div>
<div style="position:absolute;top:230.00px;font-size:16px;line-height:24.0px;font-weight:400;font-style:normal;color:#2c2431;letter-spacing:0.594px;white-space:pre;left:1034.80px;">grönsaksbuljong* (selleri,</div>
<div style="position:absolute;top:251.00px;font-size:16px;line-height:24.0px;font-weight:400;font-style:normal;color:#2c2431;letter-spacing:0.785px;white-space:pre;left:1034.80px;">morötter, palsternacka,</div>
<div style="position:absolute;top:272.00px;font-size:16px;line-height:24.0px;font-weight:400;font-style:normal;color:#2c2431;letter-spacing:0.805px;white-space:pre;left:1034.80px;">rapsolja), grädde*, morötter*,</div>
<div style="position:absolute;top:294.00px;font-size:16px;line-height:24.0px;font-weight:400;font-style:normal;color:#2c2431;letter-spacing:0.599px;white-space:pre;left:1034.80px;">svartpeppar*, chili (1%)*, salt. *</div>
<div style="position:absolute;top:315.00px;font-size:16px;line-height:24.0px;font-weight:400;font-style:normal;color:#2c2431;letter-spacing:0.190px;white-space:pre;left:1034.80px;">= Ekologisk.</div>
<div style="position:absolute;top:140.00px;font-size:16px;line-height:24.0px;font-weight:400;font-style:normal;color:#2c2431;letter-spacing:1.280px;white-space:pre;left:1321.00px;-webkit-text-stroke:0.45px #2c2431;">Kommentarer</div>
<div style="position:absolute;top:139.00px;font-size:17px;line-height:25.5px;font-weight:400;font-style:normal;color:#3a4454;letter-spacing:-0.894px;white-space:pre;left:1567.40px;">(1)</div>
<div style="position:absolute;top:186.00px;font-size:16px;line-height:24.0px;font-weight:400;font-style:normal;color:#55535a;letter-spacing:0.372px;white-space:pre;left:1361.00px;">Test Person | tracezilla</div>
<div style="position:absolute;top:204.00px;font-size:16px;line-height:24.0px;font-weight:400;font-style:normal;color:#55535a;letter-spacing:0.548px;white-space:pre;left:1361.00px;">kommenterade</div>
<div style="position:absolute;top:204.00px;font-size:16px;line-height:24.0px;font-weight:400;font-style:italic;color:#55535a;letter-spacing:0.387px;white-space:pre;left:1479.70px;">(27 okt 2025</div>
<div style="position:absolute;top:225.00px;font-size:16px;line-height:24.0px;font-weight:400;font-style:italic;color:#55535a;letter-spacing:0.104px;white-space:pre;left:1362.00px;">15:13)</div>
<div style="position:absolute;top:251.00px;font-size:16px;line-height:24.0px;font-weight:400;font-style:normal;color:#2c2431;letter-spacing:0.639px;white-space:pre;left:1360.50px;">Test</div>
<div style="position:absolute;top:142.00px;font-size:16px;line-height:24.0px;font-weight:400;font-style:normal;color:#2c2431;letter-spacing:1.422px;white-space:pre;left:1618.30px;-webkit-text-stroke:0.45px #2c2431;">Dokument</div>
<div style="position:absolute;top:186.00px;font-size:17px;line-height:25.5px;font-weight:400;font-style:normal;color:#3a3a3a;letter-spacing:-0.039px;white-space:pre;left:1655.00px;">SKU template (50...</div>
<div style="position:absolute;top:185.00px;font-size:18px;line-height:27.0px;font-weight:400;font-style:normal;color:#3a3a3a;letter-spacing:-0.681px;white-space:pre;left:1832.70px;">@</div>
<div style="position:absolute;top:421.00px;font-size:18px;line-height:27.0px;font-weight:400;font-style:normal;color:#6a7c97;letter-spacing:0.907px;white-space:pre;left:190.30px;">Partnerrelationer</div>
<div style="position:absolute;top:421.00px;font-size:18px;line-height:27.0px;font-weight:400;font-style:normal;color:#1c3a6c;letter-spacing:0.911px;white-space:pre;left:430.80px;">Mängddeklarationer</div>
<div style="position:absolute;top:421.00px;font-size:18px;line-height:27.0px;font-weight:400;font-style:normal;color:#1c3a6c;letter-spacing:0.460px;white-space:pre;left:689.00px;">Recept: Förbrukas i</div>
<div style="position:absolute;top:421.00px;font-size:18px;line-height:27.0px;font-weight:400;font-style:normal;color:#1c3a6c;letter-spacing:0.495px;white-space:pre;left:936.00px;">Recept: Producerad i</div>
<div style="position:absolute;top:421.00px;font-size:18px;line-height:27.0px;font-weight:400;font-style:normal;color:#1c3a6c;letter-spacing:0.140px;white-space:pre;left:1261.70px;">Filer</div>
<div style="position:absolute;top:421.00px;font-size:18px;line-height:27.0px;font-weight:400;font-style:normal;color:#1c3a6c;letter-spacing:0.994px;white-space:pre;left:1488.30px;">Dokument</div>
<div style="position:absolute;top:421.00px;font-size:18px;line-height:27.0px;font-weight:400;font-style:normal;color:#1c3a6c;letter-spacing:0.496px;white-space:pre;left:1720.00px;">SKU template 2</div>
<div style="position:absolute;top:496.00px;font-size:18px;line-height:27.0px;font-weight:400;font-style:normal;color:#262230;letter-spacing:0.525px;white-space:pre;left:152.30px;">Partnerrelationer kan användas för prognoser, partnerkrav (utgångsdatum etc.), tracezilla EDI och mycket mer.</div>
<div style="position:absolute;top:499.00px;font-size:17px;line-height:25.5px;font-weight:400;font-style:normal;color:#fff;letter-spacing:-0.150px;white-space:pre;left:1133.60px;">Redigera</div>
<div style="position:absolute;top:582.00px;font-size:16px;line-height:24.0px;font-weight:400;font-style:normal;color:#2c2431;letter-spacing:1.213px;white-space:pre;left:141.70px;-webkit-text-stroke:0.45px #2c2431;">Partners namn</div>
<div style="position:absolute;top:582.00px;font-size:16px;line-height:24.0px;font-weight:400;font-style:normal;color:#2c2431;letter-spacing:0.434px;white-space:pre;left:541.00px;-webkit-text-stroke:0.45px #2c2431;">Typ</div>
<div style="position:absolute;top:582.00px;font-size:16px;line-height:24.0px;font-weight:400;font-style:normal;color:#2c2431;letter-spacing:1.257px;white-space:pre;left:804.20px;-webkit-text-stroke:0.45px #2c2431;">Minsta orderantal</div>
<div style="position:absolute;top:582.00px;font-size:16px;line-height:24.0px;font-weight:400;font-style:normal;color:#2c2431;letter-spacing:1.256px;white-space:pre;left:1244.60px;-webkit-text-stroke:0.45px #2c2431;">Hållbarhetskrav</div>
<div style="position:absolute;top:582.00px;font-size:16px;line-height:24.0px;font-weight:400;font-style:normal;color:#2c2431;letter-spacing:1.375px;white-space:pre;left:1646.30px;-webkit-text-stroke:0.45px #2c2431;">Artikelnr.</div>
<div style="position:absolute;top:626.00px;font-size:16px;line-height:24.0px;font-weight:400;font-style:normal;color:#2c2431;letter-spacing:0.721px;white-space:pre;left:141.70px;">Testkund 3</div>
<div style="position:absolute;top:626.00px;font-size:16px;line-height:24.0px;font-weight:400;font-style:normal;color:#2c2431;letter-spacing:0.281px;white-space:pre;left:541.00px;">Kund</div>
<div style="position:absolute;top:626.00px;font-size:16px;line-height:24.0px;font-weight:400;font-style:normal;color:#2c2431;letter-spacing:0.602px;white-space:pre;left:804.20px;">30</div>
<div style="position:absolute;top:626.00px;font-size:16px;line-height:24.0px;font-weight:400;font-style:normal;color:#2c2431;letter-spacing:0.566px;white-space:pre;left:1244.60px;">80 dagar</div>
<div style="position:absolute;top:661.00px;font-size:16px;line-height:24.0px;font-weight:400;font-style:normal;color:#2c2431;letter-spacing:0.721px;white-space:pre;left:141.70px;">Testkund 4</div>
<div style="position:absolute;top:661.00px;font-size:16px;line-height:24.0px;font-weight:400;font-style:normal;color:#2c2431;letter-spacing:0.281px;white-space:pre;left:541.00px;">Kund</div>
<div style="position:absolute;top:661.00px;font-size:16px;line-height:24.0px;font-weight:400;font-style:normal;color:#2c2431;letter-spacing:0.602px;white-space:pre;left:804.20px;">50</div>
<div style="position:absolute;top:661.00px;font-size:16px;line-height:24.0px;font-weight:400;font-style:normal;color:#2c2431;letter-spacing:0.566px;white-space:pre;left:1244.60px;">60 dagar</div>
<div style="position:absolute;top:696.00px;font-size:16px;line-height:24.0px;font-weight:400;font-style:normal;color:#2c2431;letter-spacing:0.347px;white-space:pre;left:141.70px;">The Company ApS</div>
<div style="position:absolute;top:696.00px;font-size:16px;line-height:24.0px;font-weight:400;font-style:normal;color:#2c2431;letter-spacing:0.670px;white-space:pre;left:541.00px;">Leverantör</div>
<div style="position:absolute;top:696.00px;font-size:16px;line-height:24.0px;font-weight:400;font-style:normal;color:#2c2431;letter-spacing:1.094px;white-space:pre;left:804.20px;">0</div>
<div style="position:absolute;top:696.00px;font-size:16px;line-height:24.0px;font-weight:400;font-style:normal;color:#2c2431;letter-spacing:0.591px;white-space:pre;left:1244.60px;">0 dagar</div>
<div style="position:absolute;top:696.00px;font-size:16px;line-height:24.0px;font-weight:400;font-style:normal;color:#2c2431;letter-spacing:0.302px;white-space:pre;left:1646.30px;">2001</div>
</body></html>
